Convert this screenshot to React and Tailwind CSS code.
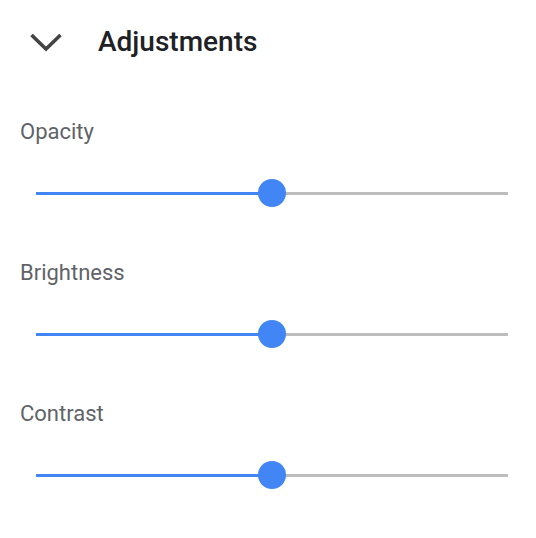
function Slider({ value }) {
  return (
    <div className="relative h-7 ml-[36px] mr-[28px] flex items-center">
      <div className="flex w-full h-[3px]">
        <div className="h-full bg-[#4285f4]" style={{ width: `${value}%` }}></div>
        <div className="h-full flex-1 bg-[#bdbdbd]"></div>
      </div>
      <div
        className="absolute top-0 w-7 h-7 -ml-[14px] rounded-full bg-[#4285f4]"
        style={{ left: `${value}%` }}
      ></div>
    </div>
  );
}

function Control({ label, value }) {
  return (
    <div className="flex flex-col">
      <div className="h-6 leading-6 pl-5 text-[22px] text-[#5f6368]">{label}</div>
      <div className="mt-[35px]">
        <Slider value={value} />
      </div>
    </div>
  );
}

export default function App() {
  return (
    <div className="w-[536px] h-[538px] bg-white font-['Roboto',sans-serif]">
      <div className="h-[84px] flex items-center">
        <svg className="ml-[29px]" width="34" height="20" viewBox="0 0 34 20">
          <polyline
            points="2.5,3 17,17 31.5,3"
            fill="none"
            stroke="#444444"
            strokeWidth="3.6"
          />
        </svg>
        <span className="ml-[35px] text-[28px] leading-8 font-medium text-[#202124]">Adjustments</span>
      </div>
      <div className="pt-[36px] flex flex-col gap-[54px]">
        <Control label="Opacity" value={50} />
        <Control label="Brightness" value={50} />
        <Control label="Contrast" value={50} />
      </div>
    </div>
  );
}
